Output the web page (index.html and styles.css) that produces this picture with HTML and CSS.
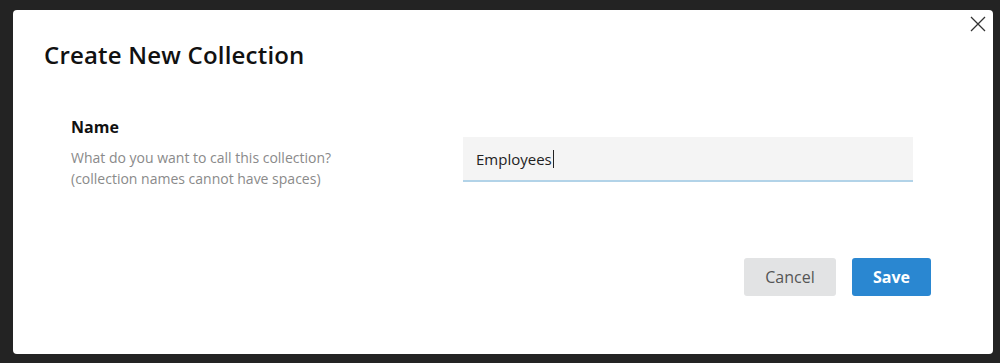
FILE: index.html
```html
<!DOCTYPE html>
<html>
    <head>
        <meta charset="UTF-8">
        <link rel="stylesheet" href="styles.css">
    </head>
    <body>
        <div class="modal">
            <span class="close">
                <svg width="16" height="16" viewBox="0 0 16 16"><path d="M1 1L15 15M15 1L1 15" stroke="#333" stroke-width="1.3" fill="none"/></svg>
            </span>
            <h2 class="title">Create New Collection</h2>

            <div class="field">
                <div class="field-info">
                    <label class="field-label">Name</label>
                    <p class="field-help">What do you want to call this collection?<br>(collection names cannot have spaces)</p>
                </div>
                <div class="field-input">
                    <span class="value">Employees</span><span class="caret"></span>
                </div>
            </div>

            <div class="actions">
                <button class="btn cancelBtn">Cancel</button>
                <button class="btn saveBtn">Save</button>
            </div>
        </div>
    </body>
</html>
```

FILE: styles.css
```css
* {
    box-sizing: border-box;
}

body {
    margin: 0;
    background: #232323;
    padding: 10px 0 0 13px;
    font-family: "Open Sans", "Liberation Sans", sans-serif;
}

/* the dialog box */
.modal {
    position: relative;
    width: 980px;
    height: 344px;
    background: #fff;
    border-radius: 4px;
    padding: 30px 31px 0 31px;
}

.close {
    position: absolute;
    top: 6px;
    right: 7px;
    width: 16px;
    height: 16px;
    display: flex;
}

.title {
    margin: 0;
    font-size: 24px;
    font-weight: 600;
    letter-spacing: 0.2px;
    line-height: 30px;
    color: #111;
}

/* form row: text on the left, input on the right */
.field {
    display: flex;
    margin-top: 46px;
    padding-left: 27px;
}

.field-info {
    width: 392px;
}

.field-label {
    display: block;
    font-size: 16px;
    font-weight: 700;
    line-height: 22px;
    color: #111;
}

.field-help {
    margin: 9px 0 0 0;
    font-size: 14px;
    line-height: 21px;
    color: #8a8a8a;
}

.field-input {
    margin-top: 21px;
    width: 450px;
    height: 45px;
    background: #f4f4f4;
    border-bottom: 2px solid #b2d3e8;
    padding: 0 13px;
    display: flex;
    align-items: center;
    font-size: 15px;
    color: #222;
}

.caret {
    display: inline-block;
    width: 1px;
    height: 18px;
    background: #222;
    margin-left: 1px;
}

.actions {
    display: flex;
    justify-content: flex-end;
    gap: 16px;
    margin-top: 69px;
    padding-right: 31px;
}

.btn {
    height: 38px;
    border: none;
    border-radius: 3px;
    font-family: inherit;
    font-size: 16px;
    cursor: pointer;
}

.cancelBtn {
    width: 92px;
    background: #e2e3e4;
    color: #555;
}

.saveBtn {
    width: 79px;
    background: #2a87d1;
    color: #fff;
    font-weight: 700;
}
```
